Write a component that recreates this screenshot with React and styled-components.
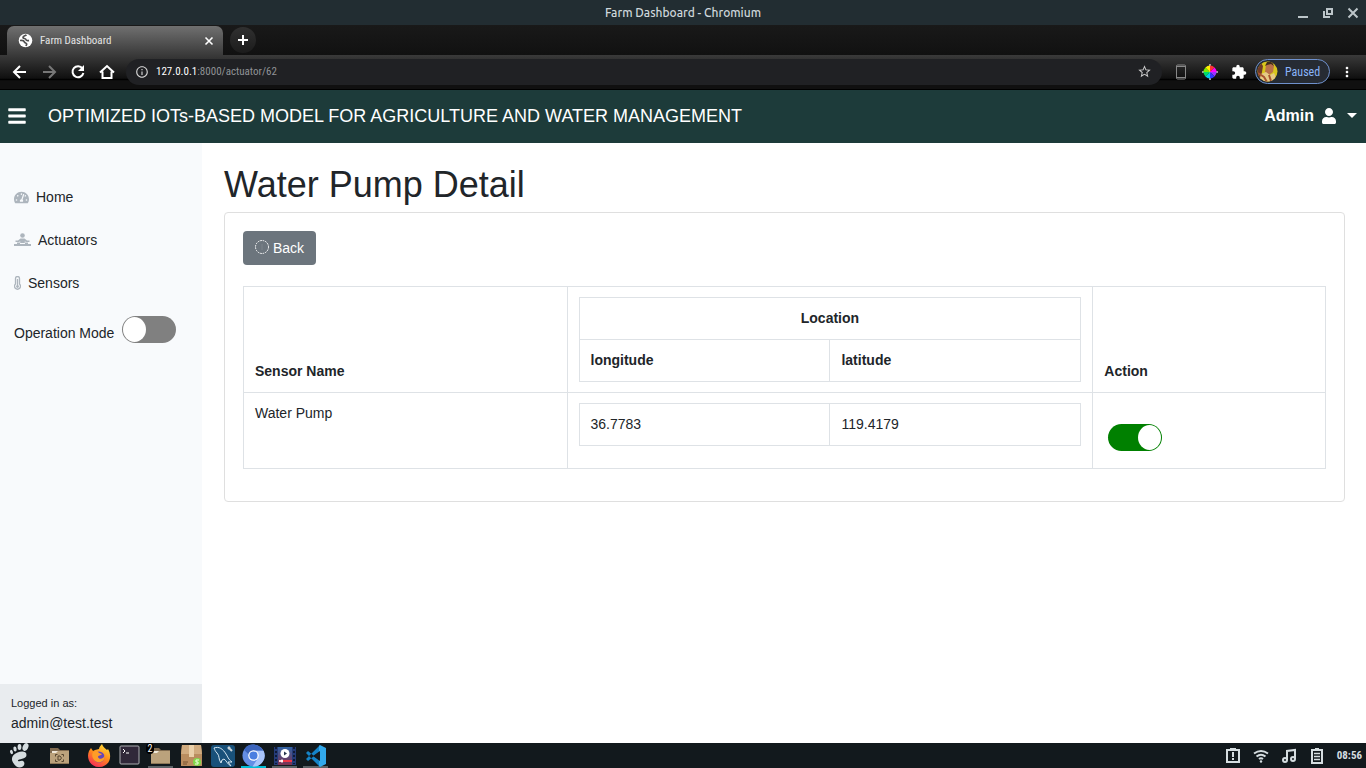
import React, { useState } from "react";
import styled, { createGlobalStyle } from "styled-components";
import { FaBars, FaUser, FaTachometerAlt } from "react-icons/fa";
import { MdInfoOutline, MdStarBorder, MdExtension, MdMoreVert } from "react-icons/md";

const GlobalStyle = createGlobalStyle`
  *, *::before, *::after { box-sizing: border-box; }
  body {
    margin: 0;
    color: #212529;
    background: #fff;
    font-family: "Liberation Sans", Arial, sans-serif;
    font-size: 14px;
    line-height: 20px;
  }
  button { font: inherit; border: 0; padding: 0; margin: 0; background: none; color: inherit; cursor: pointer; }
  a { color: inherit; text-decoration: none; }
  svg { display: block; flex: none; }
`;

const narrow = `"Ubuntu Condensed", "Liberation Sans Narrow", "Roboto Condensed", "Open Sans", sans-serif`;

const Desktop = styled.div`
  min-height: 100vh;
  display: flex;
  flex-direction: column;
`;

/* Window frame */
const TitleBar = styled.header`
  height: 25px;
  display: grid;
  grid-template-columns: 1fr auto 1fr;
  align-items: center;
  background: #222d32;
  color: #cfd8dc;
  font: 500 12px/24px "Ubuntu", "Noto Sans", sans-serif;
`;
const WindowTitle = styled.span`grid-column: 2;`;
const WindowButtons = styled.div`
  display: flex;
  justify-content: flex-end;
  gap: 13px;
  padding-right: 7px;
  color: #bcc5c9;
`;
const TabStrip = styled.div`
  height: 30px;
  display: flex;
  align-items: flex-end;
  padding-left: 7px;
  gap: 7px;
  background: linear-gradient(#191919, #111);
  color: #fff;
`;
const Tab = styled.div`
  flex: 0 1 216px;
  height: 29px;
  padding: 0 8px 0 11px;
  display: flex;
  align-items: center;
  gap: 7px;
  border-radius: 7px 7px 0 0;
  background: linear-gradient(#707070, #3a3a3a);
  font: 11px/16px ${narrow};
  color: #e4e4e4;
`;
const TabTitle = styled.span`flex: 1;`;
const NewTab = styled.button`
  width: 26px;
  height: 26px;
  margin-bottom: 2px;
  display: grid;
  place-items: center;
  border-radius: 50%;
  background: linear-gradient(#303030, #1c1c1c);
`;
const Toolbar = styled.div`
  height: 35px;
  display: flex;
  align-items: center;
  padding: 0 11px 1px 11px;
  background: linear-gradient(#3a3a3a, #101010 68%, #000 72%, #101010 76%, #101010);
  border-bottom: 1px solid #000;
  color: #fff;
`;
const NavButtons = styled.div`display: flex; gap: 11px;`;
const ToolButton = styled.button`
  display: grid;
  place-items: center;
  color: ${(p) => (p.$dim ? "#777" : "#fff")};
`;
const AddressBar = styled.div`
  flex: 1;
  height: 26px;
  margin-left: 10px;
  padding: 0 10px 0 9px;
  display: flex;
  align-items: center;
  gap: 7px;
  border-radius: 13px;
  background: #202124;
  color: #d5d5d5;
  font: 11px/16px ${narrow};
`;
const Address = styled.span`
  flex: 1;
  color: #909396;
  b { color: #fff; font-weight: 400; }
`;
const Extensions = styled.div`
  display: flex;
  align-items: center;
  gap: 13px;
  margin: 0 8px 0 11px;
`;
const Profile = styled.button`
  width: 75px;
  height: 25px;
  padding-left: 1px;
  display: flex;
  align-items: center;
  gap: 7px;
  border: 1px solid #6f91cd;
  border-radius: 13px;
  background: #262b33;
  color: #8ab4f8;
  font: 12px/16px ${narrow};
`;
const MoreButton = styled(ToolButton)`margin-left: 9px;`;

/* Application */
const AppBar = styled.nav`
  height: 53px;
  display: flex;
  align-items: center;
  padding: 0 9px 2px 7px;
  background: #1d3b3a;
  color: #fff;
`;
const Brand = styled.a`
  flex: 1;
  margin-left: 21px;
  font-size: 18px;
  line-height: 24px;
`;
const UserMenu = styled.button`
  display: flex;
  align-items: center;
  gap: 7px;
  font-size: 16px;
  font-weight: 700;
  line-height: 22px;
`;
const Caret = styled.span`
  margin-left: 3px;
  border: 5px solid transparent;
  border-top-color: #fff;
  border-bottom: 0;
`;
const Body = styled.div`flex: 1; display: flex;`;
const Sidebar = styled.aside`
  flex: 0 0 202px;
  display: flex;
  flex-direction: column;
  background: #f8fafc;
`;
const Menu = styled.div`
  flex: 1;
  display: flex;
  flex-direction: column;
  padding: 44px 14px 0;
  gap: 23px;
`;
const MenuLink = styled.a`
  display: flex;
  align-items: center;
  gap: 7px;
  svg { color: #adb5bd; }
`;
const ModeRow = styled.label`
  display: flex;
  align-items: flex-end;
  gap: 8px;
  white-space: nowrap;
`;
const Account = styled.div`
  padding: 10px 11px;
  background: #e9ecef;
  line-height: 20px;
  small { display: block; font-size: 11px; line-height: 19px; }
`;
const Main = styled.main`
  flex: 1;
  min-width: 0;
  padding: 20px 21px 0 22px;
`;
const Heading = styled.h1`
  margin: 0 0 6px;
  font-size: 36px;
  line-height: 43px;
  font-weight: 400;
`;
const Card = styled.section`
  padding: 18px 18px 32px;
  border: 1px solid #dfdfdf;
  border-radius: 4px;
`;
const BackButton = styled.button`
  height: 34px;
  padding: 0 12px;
  margin-bottom: 21px;
  display: flex;
  align-items: center;
  gap: 4px;
  border-radius: 4px;
  background: #6c757d;
  color: #fff;
`;
const Table = styled.table`
  width: 100%;
  border-collapse: collapse;
  table-layout: fixed;
  th, td { border: 1px solid #dee2e6; padding: 10px 11px; text-align: left; vertical-align: top; }
  th { vertical-align: bottom; line-height: 21px; }
  td { line-height: 21px; }
`;
const NestedTable = styled(Table)`
  margin-bottom: ${(p) => (p.$spaced ? "12px" : "0")};
  th[colspan] { text-align: center; }
`;
const SensorCol = styled.col`width: 29.9%;`;
const PlaceCol = styled.col`width: 48.6%;`;
const Switch = styled.input`
  appearance: none;
  display: block;
  width: 54px;
  height: 27px;
  margin: 0;
  padding: 1px;
  border-radius: 14px;
  background: gray;
  cursor: pointer;
  &::before {
    content: "";
    display: block;
    width: 23px;
    height: 25px;
    border-radius: 50%;
    background: #fff;
  }
  &:checked { background: green; }
  &:checked::before { margin-left: 29px; }
`;
const ActionSlot = styled.div`padding: 21px 4px 7px;`;

/* Desktop panel */
const Panel = styled.footer`
  height: 25px;
  display: flex;
  justify-content: space-between;
  background: #12191d;
  color: #d5dde0;
`;
const Launchers = styled.div`display: flex; padding-left: 6px;`;
const Launcher = styled.button`
  width: 25px;
  height: 25px;
  margin-right: ${(p) => p.$gap || 6}px;
  display: grid;
  place-items: center;
  box-shadow: ${(p) => (p.$line ? `inset 0 -2px ${p.$line}` : "none")};
  position: relative;
`;
const Count = styled.span`
  position: absolute;
  left: -2px;
  top: 0;
  width: 8px;
  border-radius: 4px;
  background: #000;
  color: #fff;
  font: 10px/11px ${narrow};
`;
const Tray = styled.div`
  display: flex;
  align-items: center;
  gap: 12px;
  padding-right: 4px;
  font: 700 11px/24px ${narrow};
`;

const Minimize = () => <svg width="12" height="12" viewBox="0 0 12 12"><path d="M1 9h10v2H1z" fill="currentColor" /></svg>;
const Restore = () => (
  <svg width="12" height="12" viewBox="0 0 12 12" fill="none" stroke="currentColor" strokeWidth="2"><path d="M5 2h5v5H5zM2 4v6h6" /></svg>
);
const Cross = () => <svg width="12" height="12" viewBox="0 0 12 12" stroke="currentColor" strokeWidth="2"><path d="M1.5 1.5l9 9m0-9l-9 9" /></svg>;
const line = { width: 18, height: 18, viewBox: "0 0 18 18", fill: "none", stroke: "currentColor", strokeWidth: 2 };
const BackArrow = () => <svg {...line}><path d="M15 9H4M9 3L3 9l6 6" /></svg>;
const ForwardArrow = () => <svg {...line}><path d="M3 9h11M9 3l6 6-6 6" /></svg>;
const Reload = () => <svg {...line}><path d="M13.500 5.500A5.500 5.500 0 1 0 14.400 10" /><path d="M15 2v6H9z" fill="currentColor" stroke="none" /></svg>;
const House = () => <svg {...line}><path d="M2 9.500L9 3l7 6.500M4.500 8.500V15h9V8.500" /></svg>;
const TabClose = () => <svg width="12" height="12" viewBox="0 0 12 12" stroke="#fff" strokeWidth="1.600"><path d="M2.500 2.500l7 7m0-7l-7 7" /></svg>;
const Plus = () => <svg width="12" height="12" viewBox="0 0 12 12" stroke="#fff" strokeWidth="2"><path d="M6 1v10M1 6h10" /></svg>;
const Globe = () => (
  <svg width="15" height="15" viewBox="0 0 15 15">
    <circle cx="7.500" cy="7.500" r="6.800" fill="#fff" />
    <path d="M8.500 1.800c-1.500 1.200-3.500.8-3.500 2.600 0 1.500 2.800.6 3 2.200.2 1 1.500 1.200 3 .8M2 7.500c2-.4 4 .2 4.500 1.600.4 1.200 2.500.6 2.200 2.200L8 13" fill="none" stroke="#505050" strokeWidth="1.700" />
  </svg>
);
const Phone = () => <svg width="16" height="16" viewBox="0 0 16 16"><rect x="3.500" y="1" width="9" height="14" rx="1" fill="none" stroke="#888" /><path d="M4 2.500h8M4 13.500h8" stroke="#888" /></svg>;
const wheel = ["#f33", "#f0f", "#93f", "#33f", "#0ce", "#0d6", "#7e0", "#fe0"];
const ColorWheel = () => (
  <svg width="16" height="16" viewBox="-8 -8 16 16">
    <path d="M0-8V8M-8 0H8" stroke="#999" strokeWidth="2" />
    {wheel.map((c, i) => <path key={c} d="M0 0V-6.500A6.500 6.500 0 0 1 4.600-4.600Z" fill={c} transform={`rotate(${i * 45})`} />)}
  </svg>
);
const Avatar = () => (
  <svg width="21" height="21" viewBox="0 0 21 21">
    <clipPath id="face"><circle cx="10.500" cy="10.500" r="10" /></clipPath>
    <g clipPath="url(#face)">
      <path d="M0 0h21v21H0z" fill="#d8c51d" />
      <path d="M0 7l4-5 2 3-1 6-2 10H0z" fill="#6f3a28" />
      <path d="M9 4l5-3 3 4-1 6-4 3-4-3z" fill="#b9714a" />
      <path d="M4 13l5-2 4 3 4-2 4 9H2z" fill="#e5c985" />
      <path d="M8 5l2-4h5l2 4-3-2-4 1z" fill="#402b1b" />
      <path d="M1 12l6 4 3 5M12 14l2 6" fill="none" stroke="#a8532e" strokeWidth="2" />
    </g>
  </svg>
);
const ActuatorIcon = () => (
  <svg width="17" height="14" viewBox="0 0 17 14" fill="currentColor">
    <circle cx="8.500" cy="2.500" r="2.300" />
    <path d="M0 11h17v2H0zM6.500 5.500h4L13 7.500h2.500V9H12l-1.200-.8V10h-4.600V8.200L5 9H1.500V7.500H4z" />
    <path d="M3 9.600h3V11H3zM11 9.600h3V11h-3z" />
  </svg>
);
const ThermometerIcon = () => (
  <svg width="7" height="14" viewBox="0 0 7 14" fill="none" stroke="currentColor">
    <path d="M1.500 8V2.500a2 2 0 0 1 4 0V8a3 3 0 1 1-4 0z" strokeWidth="1.300" />
    <path d="M3.500 3v7" strokeWidth="1.300" /><circle cx="3.500" cy="10.500" r="1" fill="currentColor" />
  </svg>
);
const DottedCircle = () => (
  <svg width="14" height="16" viewBox="0 0 14 16" fill="none" stroke="#fff">
    <circle cx="7" cy="7" r="6.500" strokeDasharray="1.600 .95" /><path d="M7 4v6" stroke="#7c858c" />
  </svg>
);
const Foot = () => (
  <svg width="22" height="25" viewBox="0 0 22 25" fill="currentColor">
    <ellipse cx="17.500" cy="4" rx="2.700" ry="4" transform="rotate(25 17.500 4)" />
    <ellipse cx="11.500" cy="4" rx="1.900" ry="3" />
    <ellipse cx="7" cy="6" rx="1.600" ry="2.500" transform="rotate(-10 7 6)" />
    <ellipse cx="3.500" cy="9" rx="1.400" ry="2.200" transform="rotate(-20 3.500 9)" />
    <path d="M18.500 12c0-4-5-4-9-2.500-5 2-7 6-4.500 10 2 4 6 6 9 4.500 3-1 3-5 1-6-2-1-3 1-5 0-1-2.500 8.500-1 8.500-6z" />
  </svg>
);
const Folder = ({ camera }) => (
  <svg width="21" height="20" viewBox="0 0 21 20">
    <path d="M1 2h8l2 2h9v13H1z" fill="#806b50" />
    <path d="M3 5h15v4H3z" fill="#eee7d8" />
    <path d="M1 7h6l2-2h11v13H1z" fill="#bba27c" /><path d="M1 17h19v1H1z" fill="#8c7656" />
    {camera && <path d="M6.500 10.500v-2h2m4 0h2v2m0 3v2h-2m-4 0h-2v-2M9 10h2l1.500 2-1.500 2H9z" fill="none" stroke="#54452f" />}
  </svg>
);
const Firefox = () => (
  <svg width="24" height="24" viewBox="0 0 24 24">
    <defs><linearGradient id="fire" x1=".8" y1="0" x2=".3" y2="1"><stop stopColor="#ffe13a" /><stop offset=".5" stopColor="#ff8b1b" /><stop offset="1" stopColor="#f52b58" /></linearGradient></defs>
    <path d="M4 4l2 3 2-1 4-1c0-2 2-4 3-5 1 3 3 4 5 6l1-1c5 8 1 18-9 18C3 23-1 14 2 7z" fill="url(#fire)" />
    <circle cx="12" cy="13" r="5.500" fill="#6545b8" />
    <path d="M6 8c3-2 5-1 6 1l3 1c-1 2-4 1-4 3 1 3 6 2 7-2 0 6-4 8-8 7-4-2-6-6-4-10z" fill="#ff9d27" />
  </svg>
);
const Terminal = () => (
  <svg width="21" height="21" viewBox="0 0 21 21">
    <rect x="1" y="1" width="19" height="18" rx="1" fill="#302839" stroke="#abadb1" />
    <path d="M4 4l2 2-2 2M7 8h3" fill="none" stroke="#fff" />
  </svg>
);
const Parcel = () => (
  <svg width="23" height="23" viewBox="0 0 23 23">
    <path d="M2 1h19l1 9v12H1V10z" fill="#b98d5f" /><path d="M2 1h19l1 9H1z" fill="#d0ab7f" />
    <path d="M9 1h5v12H9z" fill="#ead0aa" /><path d="M3 18h5M3 20h4" stroke="#765330" />
    <circle cx="17" cy="18" r="4" fill="#80d84a" /><path d="M19 16h-3v2h2v2h-3" fill="none" stroke="#efffdf" />
  </svg>
);
const Dolphin = () => (
  <svg width="24" height="24" viewBox="0 0 24 24">
    <rect y="1" width="24" height="22" rx="3" fill="#19517a" />
    <path d="M3 4c5-2 9 1 12 6 2 3 2 5 6 8l-4 0 3 4c-4-2-4-5-7-7l-2 1-1 3c-3-4-1-7-4-10-2-2-2-3-3-5z" fill="none" stroke="#d5e6f1" />
    <path d="M17 3l4 4M17 5l2-2" stroke="#cad3d9" strokeWidth="2" />
  </svg>
);
const ChromiumIcon = () => (
  <svg width="23" height="23" viewBox="0 0 24 24">
    <circle cx="12" cy="12" r="11.500" fill="#648ee5" />
    <path d="M2 6a11.500 11.500 0 0 1 20 1H12a5 5 0 0 0-5 4z" fill="#3c65bd" />
    <path d="M22.500 7A11.500 11.500 0 0 1 11 23.500L16.500 15c1-3 0-6-2.500-8z" fill="#a9c5fb" />
    <circle cx="12" cy="12" r="5.500" fill="#fff" /><circle cx="12" cy="12" r="4.200" fill="#4a7ee0" />
  </svg>
);
const Video = () => (
  <svg width="22" height="21" viewBox="0 0 22 21">
    <defs><linearGradient id="film" x1="0" y1="0" x2="0" y2="1"><stop stopColor="#2f63a5" /><stop offset="1" stopColor="#7c3150" /></linearGradient></defs>
    <path d="M0 2h22v18H0z" fill="#243b78" /><path d="M2 2v17M20 2v17" stroke="#0f1a38" strokeWidth="2" strokeDasharray="2 2" />
    <path d="M4 2h14v18H4z" fill="url(#film)" /><circle cx="11" cy="8.500" r="4.500" fill="#fff" /><path d="M10 6.500l3 2-3 2z" fill="#26364d" />
    <path d="M5 16h13" stroke="#ec3648" strokeWidth="2" /><path d="M5 16h4M8 14.500v3" stroke="#fff" strokeWidth="1.500" />
  </svg>
);
const Code = () => (
  <svg width="22" height="22" viewBox="0 0 22 22">
    <path d="M15 0v6L3 16l-2-2zM15 22v-6L3 6 1 8z" fill="#1583c7" />
    <path d="M15 0l6 3v16l-6 3-1-1V1z" fill="#32a9ec" />
    <path d="M15 6v10l-7-5z" fill="#12191d" />
  </svg>
);
const Clipboard = () => (
  <svg width="16" height="17" viewBox="0 0 16 17" fill="none" stroke="currentColor" strokeWidth="2"><path d="M2 3h12v12H2zM5 2h6M8 5v5M8 11v2" /></svg>
);
const Wifi = () => (
  <svg width="16" height="16" viewBox="0 0 16 16" fill="none" stroke="currentColor" strokeWidth="2"><path d="M1 5.500q7-5 14 0M3.500 8.500q4.500-3.500 9 0M6 11q2-1.500 4 0" /><circle cx="8" cy="13.500" r="1.200" fill="currentColor" stroke="none" /></svg>
);
const Music = () => (
  <svg width="16" height="16" viewBox="0 0 16 16" fill="none" stroke="currentColor" strokeWidth="2"><path d="M6 12V3l8-1v9" /><circle cx="4" cy="12" r="2" /><circle cx="12" cy="11" r="2" /></svg>
);
const Battery = () => (
  <svg width="16" height="17" viewBox="0 0 16 17" fill="none" stroke="currentColor" strokeWidth="2"><path d="M3 3h10v13H3zM6 2h4" /><path d="M5 6.500h6M5 9.500h6M5 12.500h6" strokeWidth="1.600" /></svg>
);

export default function App() {
  const [manual, setManual] = useState(false);
  const [pump, setPump] = useState(true);
  return (
    <Desktop>
      <GlobalStyle />
      <TitleBar>
        <WindowTitle>Farm Dashboard - Chromium</WindowTitle>
        <WindowButtons>
          <button aria-label="Minimize"><Minimize /></button>
          <button aria-label="Restore"><Restore /></button>
          <button aria-label="Close window"><Cross /></button>
        </WindowButtons>
      </TitleBar>
      <TabStrip>
        <Tab><Globe /><TabTitle>Farm Dashboard</TabTitle><button aria-label="Close tab"><TabClose /></button></Tab>
        <NewTab aria-label="New tab"><Plus /></NewTab>
      </TabStrip>
      <Toolbar>
        <NavButtons>
          <ToolButton aria-label="Back"><BackArrow /></ToolButton>
          <ToolButton aria-label="Forward" $dim><ForwardArrow /></ToolButton>
          <ToolButton aria-label="Reload"><Reload /></ToolButton>
          <ToolButton aria-label="Home"><House /></ToolButton>
        </NavButtons>
        <AddressBar>
          <MdInfoOutline size={14} />
          <Address><b>127.0.0.1</b>:8000/actuator/62</Address>
          <ToolButton aria-label="Bookmark"><MdStarBorder size={15} color="#ccc" /></ToolButton>
        </AddressBar>
        <Extensions><Phone /><ColorWheel /><MdExtension size={16} /></Extensions>
        <Profile><Avatar />Paused</Profile>
        <MoreButton aria-label="More"><MdMoreVert size={16} /></MoreButton>
      </Toolbar>

      <AppBar>
        <button aria-label="Toggle menu"><FaBars size={20} /></button>
        <Brand href="#">OPTIMIZED IOTs-BASED MODEL FOR AGRICULTURE AND WATER MANAGEMENT</Brand>
        <UserMenu>Admin <FaUser size={16} /><Caret /></UserMenu>
      </AppBar>
      <Body>
        <Sidebar>
          <Menu>
            <MenuLink href="#"><FaTachometerAlt size={15} />Home</MenuLink>
            <MenuLink href="#"><ActuatorIcon />Actuators</MenuLink>
            <MenuLink href="#"><ThermometerIcon />Sensors</MenuLink>
            <ModeRow>Operation Mode<Switch type="checkbox" checked={manual} onChange={(e) => setManual(e.target.checked)} /></ModeRow>
          </Menu>
          <Account><small>Logged in as:</small>admin@test.test</Account>
        </Sidebar>
        <Main>
          <Heading>Water Pump Detail</Heading>
          <Card>
            <BackButton><DottedCircle />Back</BackButton>
            <Table>
              <colgroup><SensorCol /><PlaceCol /><col /></colgroup>
              <thead>
                <tr>
                  <th>Sensor Name</th>
                  <th>
                    <NestedTable>
                      <tbody>
                        <tr><th colSpan={2}>Location</th></tr>
                        <tr><th>longitude</th><th>latitude</th></tr>
                      </tbody>
                    </NestedTable>
                  </th>
                  <th>Action</th>
                </tr>
              </thead>
              <tbody>
                <tr>
                  <td>Water Pump</td>
                  <td><NestedTable $spaced><tbody><tr><td>36.7783</td><td>119.4179</td></tr></tbody></NestedTable></td>
                  <td><ActionSlot><Switch type="checkbox" aria-label="Water Pump" checked={pump} onChange={(e) => setPump(e.target.checked)} /></ActionSlot></td>
                </tr>
              </tbody>
            </Table>
          </Card>
        </Main>
      </Body>
      <Panel>
        <Launchers>
          <Launcher aria-label="Applications" $gap={16}><Foot /></Launcher>
          <Launcher aria-label="Screenshots" $gap={14}><Folder camera /></Launcher>
          <Launcher aria-label="Firefox"><Firefox /></Launcher>
          <Launcher aria-label="Terminal"><Terminal /></Launcher>
          <Launcher aria-label="Files" $line="#5b6266"><Folder /><Count>2</Count></Launcher>
          <Launcher aria-label="Packages"><Parcel /></Launcher>
          <Launcher aria-label="MySQL Workbench"><Dolphin /></Launcher>
          <Launcher aria-label="Chromium" $line="#00bcd4"><ChromiumIcon /></Launcher>
          <Launcher aria-label="Video player" $line="#5b6266"><Video /></Launcher>
          <Launcher aria-label="Code editor" $line="#5b6266"><Code /></Launcher>
        </Launchers>
        <Tray><Clipboard /><Wifi /><Music /><Battery /><time>08:56</time></Tray>
      </Panel>
    </Desktop>
  );
}
